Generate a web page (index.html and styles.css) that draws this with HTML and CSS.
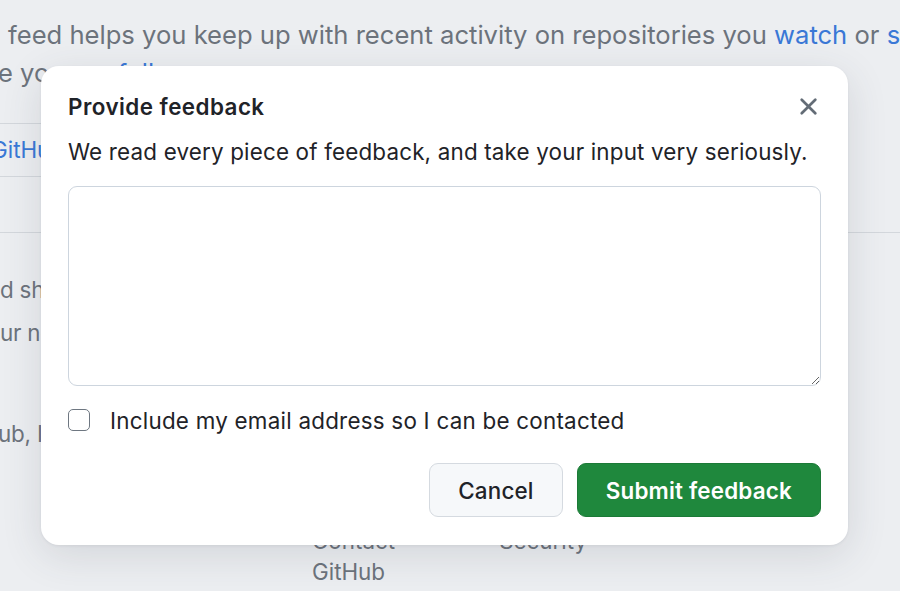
FILE: index.html
```html
<!DOCTYPE html>
<html lang="en">
<head>
    <meta charset="UTF-8">
    <meta name="viewport" content="width=device-width, initial-scale=1.0">
    <title>Provide feedback</title>
    <link rel="stylesheet" href="styles.css">
</head>
<body>
    <div class="page">
        <div class="intro">
            <div class="intro-line">feed helps you keep up with recent activity on repositories you <a href="#">watch</a> or <a href="#">star</a>, and</div>
            <div class="intro-line">e you <a href="#" class="follow-link">follow</a>.</div>
        </div>
        <div class="explore-box"><a href="#">GitHub</a></div>
        <hr class="divider">
        <div class="side-text">
            <p>d shows</p>
            <p>ur news</p>
            <p class="copyright">ub, Inc.</p>
        </div>
        <div class="footer-links">
            <ul>
                <li>Contact</li>
                <li>GitHub</li>
            </ul>
            <ul>
                <li>Security</li>
            </ul>
        </div>
    </div>

    <div class="dialog" role="dialog" aria-labelledby="dialogTitle">
        <div class="dialog-header">
            <h1 id="dialogTitle">Provide feedback</h1>
            <button class="close-btn" type="button" aria-label="Close">
                <svg viewBox="0 0 16 16">
                    <path d="M3.72 3.72a.75.75 0 0 1 1.06 0L8 6.94l3.22-3.22a.75.75 0 1 1 1.06 1.06L9.06 8l3.22 3.22a.75.75 0 1 1-1.06 1.06L8 9.06l-3.22 3.22a.75.75 0 0 1-1.06-1.06L6.94 8 3.72 4.78a.75.75 0 0 1 0-1.06Z"></path>
                </svg>
            </button>
        </div>
        <p class="dialog-text">We read every piece of feedback, and take your input very seriously.</p>
        <form id="feedbackForm">
            <textarea class="feedback-input" name="feedback"></textarea>
            <label class="check-row">
                <input type="checkbox" name="includeEmail">
                <span>Include my email address so I can be contacted</span>
            </label>
            <div class="dialog-actions">
                <button type="button" class="btn btn-cancel">Cancel</button>
                <button type="submit" class="btn btn-submit">Submit feedback</button>
            </div>
        </form>
    </div>
</body>
</html>
```

FILE: styles.css
```css
body {
    margin: 0;
    background-color: #eceef1;
    font-family: Inter, "Noto Sans", sans-serif;
    color: #1f2328;
    overflow: hidden;
    height: 591px;
}

a {
    color: #3a78d6;
    text-decoration: none;
}

.page {
    padding-top: 16px;
    height: 575px;
    overflow: hidden;
    color: #6c737c;
}

.intro {
    font-size: 25.6px;
    line-height: 38px;
    white-space: nowrap;
}

.intro-line:first-child {
    padding-left: 8px;
}

.intro-line:last-child {
    margin-left: -2px;
}

.follow-link {
    margin-left: 46px;
}

.explore-box {
    margin-top: 31px;
    margin-left: -20px;
    width: 200px;
    height: 52px;
    border: 1px solid #d3d7dc;
    border-radius: 8px;
    font-size: 22.4px;
    line-height: 52px;
    padding-left: 10px;
}

.divider {
    margin: 55px 0 0;
    border: none;
    border-top: 1px solid #d3d7dc;
}

.side-text {
    font-size: 22.4px;
    line-height: 43px;
    margin-top: 35px;
    letter-spacing: -0.2px;
}

.side-text p {
    margin: 0;
}

.side-text .copyright {
    margin-top: 58px;
    margin-left: -2px;
}

.footer-links {
    display: flex;
    gap: 104px;
    margin-top: 70px;
    padding-left: 312px;
    font-size: 22.4px;
    line-height: 31px;
}

.footer-links ul {
    list-style: none;
    margin: 0;
    padding: 0;
}

/* Dialog sits on top of the page */
.dialog {
    position: absolute;
    top: 66px;
    left: 41px;
    width: 807px;
    box-sizing: border-box;
    padding: 20px 27px 28px;
    background: #fff;
    border-radius: 18px;
    box-shadow: 0 10px 40px rgba(60, 66, 80, 0.14), 0 1px 3px rgba(60, 66, 80, 0.08);
}

.dialog-header {
    display: flex;
    align-items: center;
    justify-content: space-between;
    height: 40px;
}

.dialog-header h1 {
    margin: 0;
    font-size: 22.4px;
    font-weight: 600;
    letter-spacing: 0.45px;
}

.close-btn {
    display: flex;
    align-items: center;
    justify-content: center;
    width: 32px;
    height: 32px;
    margin-right: -3px;
    padding: 0;
    border: none;
    background: none;
    cursor: pointer;
}

.close-btn svg {
    width: 29px;
    height: 29px;
    fill: #636c76;
}

.dialog-text {
    margin: 10px 0 0;
    font-size: 22.4px;
    line-height: 32px;
    letter-spacing: 0.18px;
}

.feedback-input {
    display: block;
    width: 100%;
    height: 200px;
    box-sizing: border-box;
    margin-top: 18px;
    padding: 8px 12px;
    border: 1.5px solid #cdd5de;
    border-radius: 9px;
    font-family: inherit;
    font-size: 22.4px;
}

.check-row {
    display: flex;
    align-items: center;
    gap: 20px;
    margin-top: 18px;
    height: 32px;
    font-size: 22.4px;
    letter-spacing: 0.24px;
}

.check-row input {
    appearance: none;
    margin: 0;
    width: 22px;
    height: 22px;
    border: 1.5px solid #6e7781;
    border-radius: 5px;
    background: #fff;
}

.dialog-actions {
    display: flex;
    justify-content: flex-end;
    gap: 14px;
    margin-top: 27px;
}

.btn {
    height: 54px;
    padding: 0 28px;
    border-radius: 9px;
    font-family: inherit;
    font-size: 22.4px;
    letter-spacing: 0.2px;
    cursor: pointer;
}

.btn-cancel {
    background-color: #f6f8fa;
    border: 1.5px solid #d5dae0;
    color: #1f2328;
    font-weight: 500;
}

.btn-submit {
    background-color: #1f883d;
    border: 1.5px solid #1c7a37;
    color: #fff;
    font-weight: 600;
}

.btn-submit:hover {
    background-color: #1a7f37;
}
```
